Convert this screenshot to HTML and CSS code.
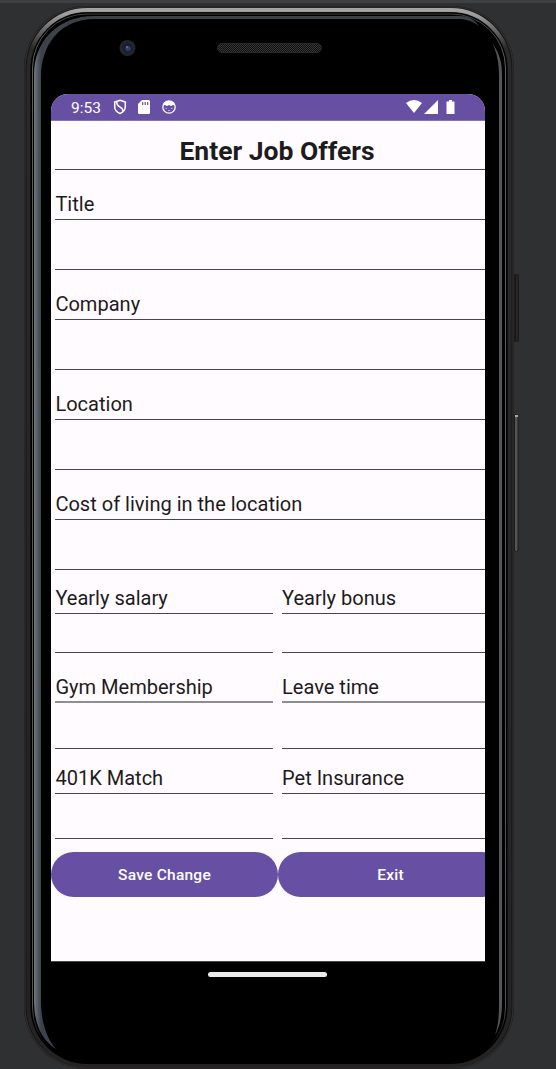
FILE: index.html
```html
<!DOCTYPE html>
<html lang="en">
<head>
<meta charset="utf-8">
<title>Enter Job Offers</title>
<link rel="stylesheet" href="styles.css">
</head>
<body>
<main class="stage">
  <svg class="device" width="556" height="1069" viewBox="0 0 556 1069" fill="none">
    <defs>
      <linearGradient id="rim" x1="0" y1="0" x2="0" y2="1069" gradientUnits="userSpaceOnUse">
        <stop offset="0" stop-color="#b4b4b4"/><stop offset=".015" stop-color="#999"/><stop offset=".045" stop-color="#2a2929"/><stop offset="1" stop-color="#242323"/>
      </linearGradient>
      <linearGradient id="hair" x1="0" y1="0" x2="0" y2="1069" gradientUnits="userSpaceOnUse">
        <stop offset="0" stop-color="#333"/><stop offset=".05" stop-color="#606060"/><stop offset=".94" stop-color="#555"/><stop offset=".98" stop-color="#000"/>
      </linearGradient>
      <linearGradient id="glass" x1="34" y1="0" x2="41" y2="0" gradientUnits="userSpaceOnUse">
        <stop offset="0" stop-color="#73767b"/><stop offset=".5" stop-color="#565a63"/><stop offset="1" stop-color="#3d4149"/>
      </linearGradient>
      <pattern id="mesh" width="2" height="2" patternUnits="userSpaceOnUse">
        <path d="M0 0h1v1H0zM1 1h1v1H1z" fill="#353535"/>
      </pattern>
    </defs>
    <path d="M0 0h556v3H0z" fill="#3e4042"/>
    <rect x="514" y="274" width="5" height="68" rx="1.5" fill="#1c1b1b"/>
    <path d="M517 275v66" stroke="#303030"/>
    <rect x="514.5" y="414.5" width="3.500" height="137" rx="1.5" fill="#545454" stroke="#1c1c1c"/>
    <path d="M515 416h3" stroke="#aaa" stroke-width="2"/>
    <rect x="24" y="6" width="490" height="1063" rx="62" fill="#141313"/>
    <rect x="25" y="7" width="488" height="1061" rx="61" stroke="#302c2c" stroke-width="1.5"/>
    <rect x="28.500" y="10" width="481" height="1055.500" rx="59" stroke="url(#rim)" stroke-width="4"/>
    <rect x="30.500" y="12.500" width="477" height="1051.500" rx="57" fill="#000"/>
    <rect x="32.500" y="14" width="473" height="1048" rx="54" stroke="url(#hair)"/>
    <path d="M34 75C34 40 59 16 94 16H459c9 0 15 3 20 10-7-5-12-7-21-7H95C61 19 41 43 41 78V1000c0 21 5 38 15 49-15-9-22-26-22-49z" fill="url(#glass)"/>
    <path d="M493 44c6 9 9 18 9 31v928c0 15-3 25-7 32 3-8 4-18 4-30V76c0-13-2-22-6-32z" fill="#555459"/>
    <circle cx="127.5" cy="48" r="8" fill="#252525"/>
    <circle cx="127.5" cy="48" r="5" fill="#182037"/>
    <circle cx="128" cy="48.5" r="2.500" fill="#2b4278"/>
    <circle cx="127" cy="47" r=".8" fill="#8b9ac5"/>
    <rect x="217.5" y="43.5" width="104" height="9" rx="4.5" fill="#111" stroke="#292929"/>
    <rect x="218" y="44" width="103" height="8" rx="4" fill="url(#mesh)"/>
  </svg>

  <div class="screen">
    <header class="status">
      <span class="clock">9:53</span>
      <svg class="shield" width="14" height="16" viewBox="0 0 14 16" fill="none" stroke="#fff" stroke-width="1.5">
        <path d="M7 1.200 12.300 3v4.500c0 3.200-2 5.700-5.300 7-3.300-1.300-5.300-3.800-5.300-7V3z"/><path d="M3.800 2.500c-.3 3 .8 4.200 3 5.300s3.300 2.500 3 4.500"/>
      </svg>
      <svg class="card" width="12" height="14" viewBox="0 0 12 14">
        <path d="M4 0h6.5Q12 0 12 1.500v11Q12 14 10.500 14h-9Q0 14 0 12.500V4z" fill="#fff"/><path d="M4.700 2v3M7.200 2v3M9.700 2v3" stroke="#6750a4" stroke-width="1.200"/>
      </svg>
      <svg class="face" width="14" height="14" viewBox="0 0 14 14">
        <circle cx="7" cy="7" r="6.200" fill="none" stroke="#fff" stroke-width="1.300"/>
        <path d="M1 5.500C2 2 4 1 7 1s5 1 6 4.500L11 5l-2 1-2-1-2 1-2-1z" fill="#fff"/><path d="M3.500 8.500H5M9 8.500h1.500M6 10.500h2" stroke="#b9aed6"/>
      </svg>
      <svg class="signals" width="50" height="14" viewBox="0 0 50 14" fill="#fff">
        <path d="M0 3Q8-3 16 3L8 13zM32 0v14H18zM41 1.500h2V0h3v1.500h2q.5 0 .5.500v11.500q0 .5-.5.500h-7q-.5 0-.5-.5V2q0-.5.5-.5z"/>
      </svg>
    </header>

    <form class="form">
      <h1 class="heading">Enter Job Offers</h1>
      <div class="field">Title</div><div class="field"></div>
      <div class="field">Company</div><div class="field"></div>
      <div class="field">Location</div><div class="field"></div>
      <div class="field">Cost of living in the location</div><div class="field"></div>
      <div class="pair salary"><div class="field">Yearly salary</div><div class="field">Yearly bonus</div></div>
      <div class="pair salary-input"><div class="field"></div><div class="field"></div></div>
      <div class="pair gym"><div class="field soft">Gym Membership</div><div class="field soft">Leave time</div></div>
      <div class="pair gym-input"><div class="field"></div><div class="field"></div></div>
      <div class="pair match"><div class="field">401K Match</div><div class="field">Pet Insurance</div></div>
      <div class="pair match-input"><div class="field"></div><div class="field"></div></div>
      <div class="actions"><button class="button" type="button">Save Change</button><button class="button" type="button">Exit</button></div>
    </form>
  </div>
  <div class="home-bar"></div>
</main>
</body>
</html>
```
FILE: styles.css
```css
* { box-sizing: border-box; }
body {
  margin: 0;
  background: #2e3032;
  font-family: Roboto, sans-serif;
  color: #1d1b20;
}
.stage {
  position: relative;
  width: 556px;
  height: 1069px;
  padding: 94px 71px 0 51px;
  overflow: hidden;
}
.device { position: absolute; inset: 0; }
.screen {
  position: relative;
  width: 434px;
  height: 868px;
  overflow: hidden;
  border-radius: 17px 17px 0 0;
  border-bottom: 1px solid #4a484a;
  background: #fffbff;
}
.status {
  display: flex;
  align-items: center;
  height: 27px;
  padding: 0 29px 0 20px;
  background: #6750a4;
  border-bottom: 1px solid #8875b8;
  color: #fff;
}
.clock { width: 42px; font-size: 15.5px; line-height: 26px; padding-top: 2px; }
.card { margin-left: 11px; }
.face { margin-left: 12px; }
.signals { margin-left: auto; }
.form { width: 454px; }
.heading {
  height: 49px;
  margin: 0 0 0 4px;
  padding-right: 6px;
  border-bottom: 1px solid #49454c;
  font-size: 26.5px;
  font-weight: 700;
  line-height: 59px;
  text-align: center;
}
.field {
  display: flex;
  align-items: flex-end;
  height: 50px;
  margin: 0 5px 0 4px;
  padding: 0 0 3px 0.4px;
  border-bottom: 1px solid #49454c;
  font-size: 20.05px;
  line-height: 24px;
}
.pair {
  display: grid;
  grid-template-columns: 227px 227px;
}
.pair .field { height: 100%; }
.pair .field:nth-child(2) { padding-left: 0; }
.form > .field { margin-right: 0; }
.salary { height: 44px; }
.salary-input { height: 39px; }
.gym { height: 50px; }
.gym-input { height: 46px; }
.match { height: 45px; }
.match-input { height: 45px; }
.field.soft { padding-bottom: 2px; border-bottom: 2px solid #918e93; }
.actions {
  display: grid;
  grid-template-columns: 227px 227px;
  padding-top: 13px;
}
.button {
  height: 44.5px;
  border: 0;
  border-radius: 23px;
  background: #6750a4;
  color: #fff;
  font: 500 15.5px/45px Roboto, sans-serif;
  letter-spacing: 0.25px;
}
.button:last-child { padding-right: 8px; }
.home-bar {
  position: relative;
  width: 119px;
  height: 5px;
  margin: 10px 0 0 157px;
  border-radius: 3px;
  background: #ebebeb;
}
```
